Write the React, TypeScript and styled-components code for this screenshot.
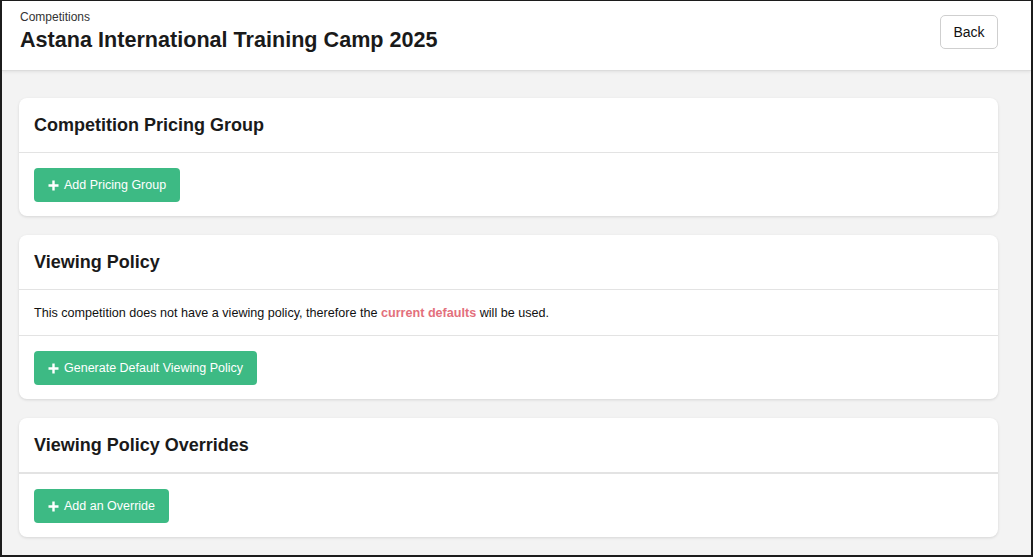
import React from "react"
import styled, { createGlobalStyle } from "styled-components"

const GlobalStyle = createGlobalStyle`
  html, body {
    margin: 0;
    padding: 0;
    background: #ffffff;
    font-family: "Liberation Sans", Arial, sans-serif;
  }
`

const Plus = () => (
  <svg width="11" height="11" viewBox="0 0 11 11">
    <path d="M5.5 0.5v10M0.5 5.5h10" stroke="#fff" strokeWidth="2.4" />
  </svg>
)

const App = () => {
  return (
    <>
      <GlobalStyle />
      <Frame>
        <Header>
          <TitleBlock>
            <Crumb>Competitions</Crumb>
            <PageTitle>Astana International Training Camp 2025</PageTitle>
          </TitleBlock>
          <BackButton>Back</BackButton>
        </Header>
        <Content>
          <Card>
            <CardHead>Competition Pricing Group</CardHead>
            <CardSection>
              <GreenButton>
                <Plus /> Add Pricing Group
              </GreenButton>
            </CardSection>
          </Card>

          <Card>
            <CardHead>Viewing Policy</CardHead>
            <CardSection $text>
              This competition does not have a viewing policy, therefore the{" "}
              <DefaultsLink>current defaults</DefaultsLink> will be used.
            </CardSection>
            <CardSection>
              <GreenButton>
                <Plus /> Generate Default Viewing Policy
              </GreenButton>
            </CardSection>
          </Card>

          <Card>
            <CardHead $thick>Viewing Policy Overrides</CardHead>
            <CardSection>
              <GreenButton>
                <Plus /> Add an Override
              </GreenButton>
            </CardSection>
          </Card>
        </Content>
      </Frame>
    </>
  )
}

const Frame = styled.div`
  box-sizing: border-box;
  width: 1033px;
  height: 557px;
  border: 2px solid #1c1c1c;
  border-top-width: 1px;
  background: #f3f3f3;
  display: flex;
  flex-direction: column;
  overflow: hidden;
`

const Header = styled.div`
  height: 69px;
  background: #fff;
  border-bottom: 1px solid #dcdcdc;
  box-shadow: 0 1px 3px rgba(0, 0, 0, 0.08);
  display: flex;
  align-items: flex-start;
  justify-content: space-between;
  padding: 0 33px 0 18px;
  flex-shrink: 0;
`

const TitleBlock = styled.div`
  display: flex;
  flex-direction: column;
  padding-top: 9px;
`

const Crumb = styled.div`
  font-size: 12px;
  color: #333;
  line-height: 14px;
`

const PageTitle = styled.h1`
  margin: 3px 0 0;
  font-size: 21.6px;
  line-height: 26px;
  font-weight: 700;
  color: #1a1a1a;
`

const BackButton = styled.button`
  margin-top: 14px;
  width: 58px;
  height: 34px;
  background: #fff;
  border: 1px solid #cfcfcf;
  border-radius: 5px;
  font-family: "Liberation Sans", Arial, sans-serif;
  font-size: 14px;
  color: #111;
  cursor: pointer;
`

const Content = styled.div`
  padding: 27px 33px 18px 17px;
  display: flex;
  flex-direction: column;
  gap: 19px;
`

const Card = styled.div`
  background: #fff;
  border-radius: 8px;
  box-shadow: 0 1px 3px rgba(0, 0, 0, 0.12);
`

const CardHead = styled.h2<{ $thick?: boolean }>`
  margin: 0;
  height: ${(p) => (p.$thick ? 56 : 55)}px;
  box-sizing: border-box;
  padding: 0 15px;
  display: flex;
  align-items: center;
  font-size: 18px;
  font-weight: 700;
  color: #1a1a1a;
  border-bottom: ${(p) => (p.$thick ? 2 : 1)}px solid #e3e3e3;
`

const CardSection = styled.div<{ $text?: boolean }>`
  padding: ${(p) => (p.$text ? "14px 15px 13px" : "15px 15px 14px")};
  font-size: 12.6px;
  line-height: 18px;
  color: #111;
  & + & {
    border-top: 1px solid #e3e3e3;
  }
`

const DefaultsLink = styled.a`
  color: #e3707c;
  font-weight: 700;
  cursor: pointer;
`

const GreenButton = styled.button`
  height: 34px;
  padding: 0 14px;
  background: #3dba84;
  border: none;
  border-radius: 4px;
  color: #fff;
  font-family: "Liberation Sans", Arial, sans-serif;
  font-size: 12.5px;
  display: inline-flex;
  align-items: center;
  gap: 5px;
  cursor: pointer;
`

export default App
